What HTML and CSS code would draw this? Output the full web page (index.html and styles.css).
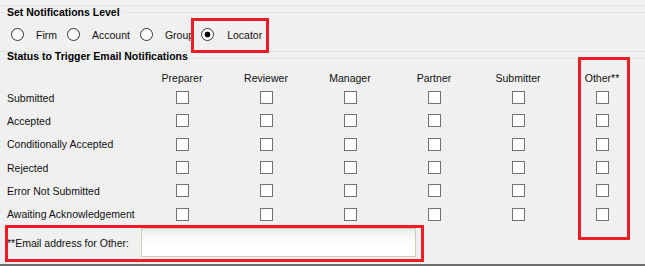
FILE: index.html
```html
<!DOCTYPE html>
<html>
<head>
  <title>Email Notifications</title>
  <link rel="stylesheet" href="styles.css">
</head>
<body>
  <div class="panel">

    <fieldset class="group level-group">
      <legend>Set Notifications Level</legend>
      <div class="levels">
        <label class="level"><input type="radio" name="level" value="firm"><span>Firm</span></label>
        <label class="level"><input type="radio" name="level" value="account"><span>Account</span></label>
        <label class="level"><input type="radio" name="level" value="group"><span>Group</span></label>
        <label class="level level-marked"><input type="radio" name="level" value="locator" checked><span>Locator</span></label>
      </div>
    </fieldset>

    <fieldset class="group status-group">
      <legend>Status to Trigger Email Notifications</legend>
      <div class="matrix-wrap">
        <table class="matrix">
          <colgroup>
            <col class="status-col">
            <col span="6" class="role-col">
          </colgroup>
          <thead>
            <tr>
              <th></th>
              <th>Preparer</th>
              <th>Reviewer</th>
              <th>Manager</th>
              <th>Partner</th>
              <th>Submitter</th>
              <th>Other**</th>
            </tr>
          </thead>
          <tbody id="statusRows"></tbody>
        </table>
        <div class="mark-other"></div>
      </div>
      <div class="email-row">
        <label for="otherEmail">**Email address for Other:</label>
        <input type="text" id="otherEmail" name="otherEmail">
      </div>
    </fieldset>

  </div>

  <script>
    // build the status / role checkbox grid
    const statuses = ['Submitted', 'Accepted', 'Conditionally Accepted', 'Rejected', 'Error Not Submitted', 'Awaiting Acknowledgement'];
    const roles = ['preparer', 'reviewer', 'manager', 'partner', 'submitter', 'other'];
    const statusRows = document.getElementById('statusRows');

    statuses.forEach(function(status, i) {
      const row = document.createElement('tr');
      const name = document.createElement('td');
      name.className = 'status-name';
      name.textContent = status;
      row.appendChild(name);

      roles.forEach(function(role) {
        const cell = document.createElement('td');
        const box = document.createElement('input');
        box.type = 'checkbox';
        box.name = role + '_' + i;
        cell.appendChild(box);
        row.appendChild(cell);
      });

      statusRows.appendChild(row);
    });
  </script>
</body>
</html>
```

FILE: styles.css
```css
/* notification settings panel */
body {
  margin: 0;
  background-color: #f0f0f0;
  font-family: "Liberation Sans", Arial, sans-serif;
  font-size: 10.5px;
  color: #111;
}

.panel {
  margin-top: 5px;
  padding-bottom: 2px;
  border-top: 1px solid #e2e2e2;
  border-bottom: 2px solid #6e6e6e;
}

.group {
  margin: 0;
  padding: 0;
  min-width: 0;
  border: 0;
  border-top: 1px solid #e2e2e2;
}

.group legend {
  margin-left: 5px;
  padding: 0 2px;
  font-weight: bold;
  line-height: 12px;
  color: #000;
}

.level-group {
  border-bottom: 1px solid #e2e2e2;
}

.status-group {
  margin-top: -1px;
}

.status-group legend {
  line-height: 11px;
  padding-bottom: 3px;
}

/* radio row */
.levels {
  display: flex;
  align-items: center;
  height: 33px;
}

.level {
  display: flex;
  align-items: center;
}

.level input {
  margin: 0 12px 0 10px;
}

.level:first-child input {
  margin-left: 11px;
}

.level-marked {
  align-self: flex-start;
  height: 35px;
  box-sizing: border-box;
  margin-left: -3px;
  padding: 0 4px 2px 7px;
  border: 3px solid #ed1c24;
}

.level-marked input {
  margin: 0 13px 0 0;
}

input[type="radio"] {
  appearance: none;
  width: 13px;
  height: 13px;
  box-sizing: border-box;
  border: 1px solid #333;
  border-radius: 50%;
  background: #fff;
}

input[type="radio"]:checked {
  background: radial-gradient(circle, #000 0 2.6px, #fff 3.2px);
}

/* status grid */
.matrix-wrap {
  position: relative;
}

.matrix {
  width: 644px;
  border-collapse: collapse;
  border-spacing: 0;
  table-layout: fixed;
}

.status-col {
  width: 140px;
}

.role-col {
  width: 84px;
}

.matrix thead tr {
  height: 21px;
}

.matrix th {
  padding: 7px 0 0;
  vertical-align: top;
  font-weight: normal;
  line-height: 12px;
  text-align: center;
}

.matrix tbody tr {
  height: 23.3px;
}

.matrix td {
  padding: 0;
  vertical-align: middle;
}

.matrix .status-name {
  padding-left: 7px;
  white-space: nowrap;
}

.matrix input[type="checkbox"] {
  appearance: none;
  display: block;
  width: 13px;
  height: 13px;
  box-sizing: border-box;
  margin: 0 auto;
  border: 1px solid #727272;
  background: #fff;
}

.mark-other {
  position: absolute;
  left: 578px;
  top: -8px;
  width: 52px;
  height: 183px;
  box-sizing: border-box;
  border: 3px solid #ed1c24;
  pointer-events: none;
}

/* email for Other */
.email-row {
  display: flex;
  align-items: flex-start;
  width: 419px;
  height: 37px;
  box-sizing: border-box;
  margin: -1px 0 0 5px;
  border: 3px solid #ed1c24;
}

.email-row label {
  flex: 0 0 134px;
  align-self: center;
  margin-left: -1px;
}

.email-row input {
  width: 275px;
  height: 29px;
  box-sizing: border-box;
  margin: 0;
  padding: 0 4px;
  border: 1px solid #d3cbb2;
  background: linear-gradient(#ececec, #fff 55%);
  font: inherit;
}
```
